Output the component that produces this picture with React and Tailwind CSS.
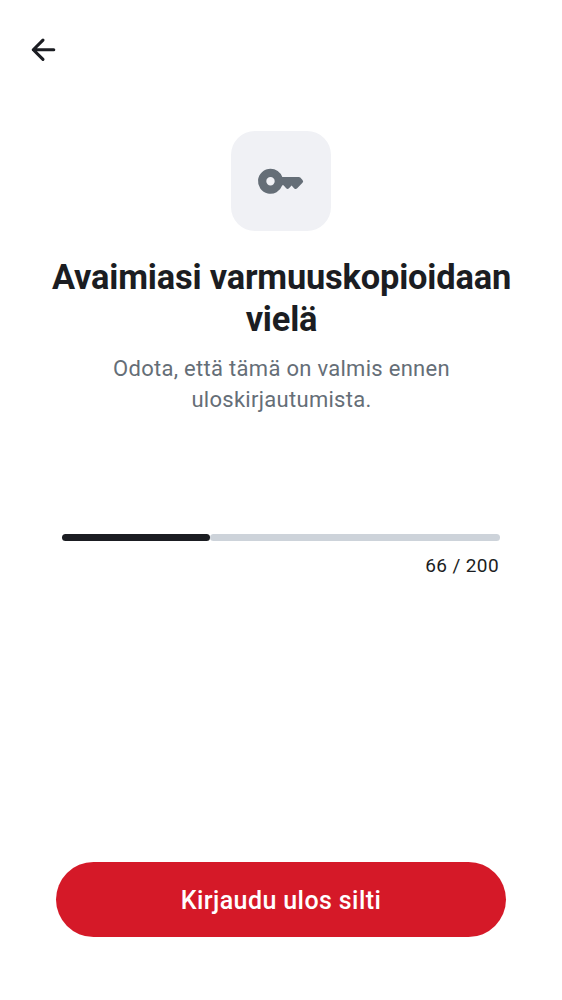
export default function App() {
  return (
    <main className="flex h-[1000px] w-[562px] flex-col bg-white font-['Roboto',sans-serif] text-[#1b1d22]">
      <header className="flex h-[131px] pl-[25px] pt-[31px]">
        <button aria-label="Takaisin" className="size-[37.5px]">
          <svg viewBox="0 0 24 24" className="size-full" fill="none" stroke="currentColor" strokeWidth="2" strokeLinecap="round" strokeLinejoin="round">
            <path d="M18.4 12H5.3M11.5 5.8 5.3 12l6.2 6.2" />
          </svg>
        </button>
      </header>
      <section className="flex h-[403px] flex-col items-center text-center">
        <div className="flex size-[100px] items-center justify-center rounded-[24px] bg-[#f0f1f5] text-[#656e77]">
          <svg viewBox="0 0 50 50" className="size-[50px]" fill="currentColor">
            <path fillRule="evenodd" d="M14.5 12.7a12.5 12.5 0 0 1 11.8 8.3h16.5a2.1 2.1 0 0 1 1.5.6l2.2 2.4a2 2 0 0 1 0 2.8l-5.3 5.5a2.1 2.1 0 0 1-2.9.1L35.6 29.6l-2.6 2.6a2 2 0 0 1-2.8 0l-2.7-2.9h-1.2A12.5 12.5 0 1 1 14.5 12.7Zm0 8.3a4.2 4.2 0 1 0 0 8.4 4.2 4.2 0 0 0 0-8.4Z" />
          </svg>
        </div>
        <h1 className="mt-[25px] pl-px text-[34.4px] font-bold leading-[42px] tracking-[-0.18px]">Avaimiasi varmuuskopioidaan<br />vielä</h1>
        <p className="mt-[13px] pl-px text-[22px] leading-[31px] tracking-[0.29px] text-[#656e77]">Odota, että tämä on valmis ennen<br />uloskirjautumista.</p>
      </section>
      <section className="mx-[62px] flex flex-col">
        <div className="flex h-[7px] w-[438px]">
          <div className="w-[148px] rounded-full bg-[#1b1d22]" />
          <div className="flex-1 rounded-full bg-[#cdd3da]" />
        </div>
        <p className="mt-[12px] pr-px text-right text-[19px] leading-[25px] tracking-[0.4px]">66 / 200</p>
      </section>
      <footer className="mt-auto px-14 pb-[63px]">
        <button className="block h-[75px] w-[450px] rounded-full bg-[#d51928] pt-[3px] text-[25px] font-medium tracking-[0.4px] text-white">Kirjaudu ulos silti</button>
      </footer>
    </main>
  );
}
